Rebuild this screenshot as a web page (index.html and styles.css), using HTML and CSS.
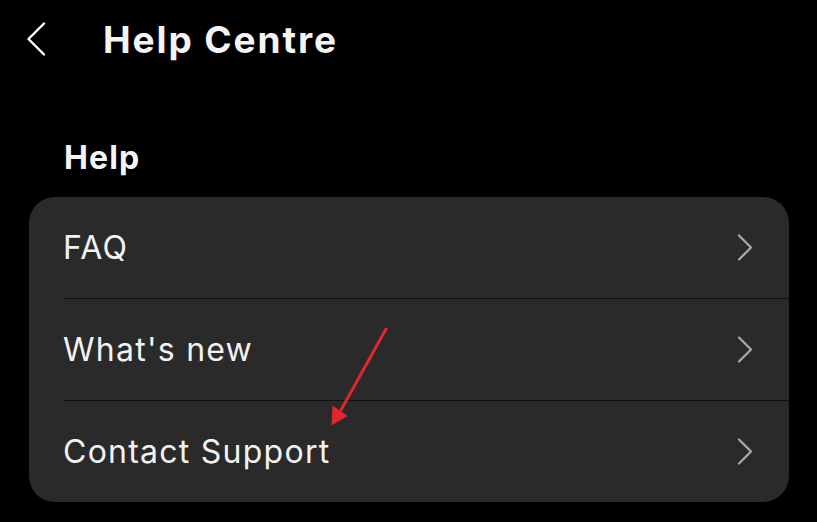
FILE: index.html
```html
<!DOCTYPE html>
<html lang="en">
<head>
<meta charset="utf-8">
<title>Help Centre</title>
<link rel="stylesheet" href="styles.css">
</head>
<body>
<div class="screen">
  <header class="topbar">
    <button class="back" aria-label="Back">
      <svg width="20" height="34" viewBox="0 0 20 34"><path d="M18 1.5 L2.5 17 L18 32.5" fill="none" stroke="#ffffff" stroke-width="2.4" stroke-linecap="round" stroke-linejoin="round"/></svg>
    </button>
    <h1 class="title">Help Centre</h1>
  </header>
  <section class="section">
    <h2 class="section-title">Help</h2>
    <ul class="card">
      <li class="row"><span class="label">FAQ</span><svg class="chev" width="16" height="27" viewBox="0 0 16 27"><path d="M2 1.5 L14 13.5 L2 25.5" fill="none" stroke="#a9a9a9" stroke-width="2.2" stroke-linecap="round" stroke-linejoin="round"/></svg></li>
      <li class="row"><span class="label">What's new</span><svg class="chev" width="16" height="27" viewBox="0 0 16 27"><path d="M2 1.5 L14 13.5 L2 25.5" fill="none" stroke="#a9a9a9" stroke-width="2.2" stroke-linecap="round" stroke-linejoin="round"/></svg></li>
      <li class="row"><span class="label">Contact Support</span><svg class="chev" width="16" height="27" viewBox="0 0 16 27"><path d="M2 1.5 L14 13.5 L2 25.5" fill="none" stroke="#a9a9a9" stroke-width="2.2" stroke-linecap="round" stroke-linejoin="round"/></svg></li>
    </ul>
  </section>
  <svg class="annotation" width="817" height="522" viewBox="0 0 817 522">
    <line x1="386" y1="329" x2="341" y2="410" stroke="#e1262c" stroke-width="3" stroke-linecap="round"/>
    <polygon points="331.5,425.5 332.5,405.5 347.5,416" fill="#e1262c"/>
  </svg>
</div>
</body>
</html>
```
FILE: styles.css
```css
* { box-sizing: border-box; }
html, body {
  margin: 0;
  padding: 0;
  background: #000000;
}
body {
  font-family: Inter, "Liberation Sans", Arial, sans-serif;
  color: #f5f5f5;
  width: 817px;
  height: 522px;
  overflow: hidden;
}
.screen {
  position: relative;
  width: 817px;
  height: 522px;
}
.topbar {
  display: flex;
  align-items: center;
  height: 78px;
  padding-left: 26px;
  gap: 57px;
}
.back {
  display: flex;
  align-items: center;
  background: none;
  border: 0;
  padding: 0;
  margin: 0;
}
.title {
  margin: 0;
  font-size: 37px;
  font-weight: 700;
  letter-spacing: 1.9px;
  color: #f4f4f4;
}
.section {
  padding: 60px 28px 0 29px;
}
.section-title {
  margin: 0 0 19px 35px;
  font-size: 32px;
  font-weight: 700;
  line-height: 40px;
  letter-spacing: 1.1px;
  color: #f4f4f4;
}
.card {
  list-style: none;
  margin: 0;
  padding: 0;
  width: 760px;
  background: #2a2a2a;
  border-radius: 26px;
  overflow: hidden;
}
.row {
  display: flex;
  align-items: center;
  justify-content: space-between;
  height: 102px;
  margin-left: 34px;
  padding-right: 36px;
  border-top: 1px solid #101010;
}
.row:first-child {
  border-top: 0;
  height: 101px;
}
.label {
  font-size: 32px;
  font-weight: 400;
  color: #f2f2f2;
  letter-spacing: 1.25px;
}
.chev {
  display: block;
}
.annotation {
  position: absolute;
  left: 0;
  top: 0;
  pointer-events: none;
}
```
